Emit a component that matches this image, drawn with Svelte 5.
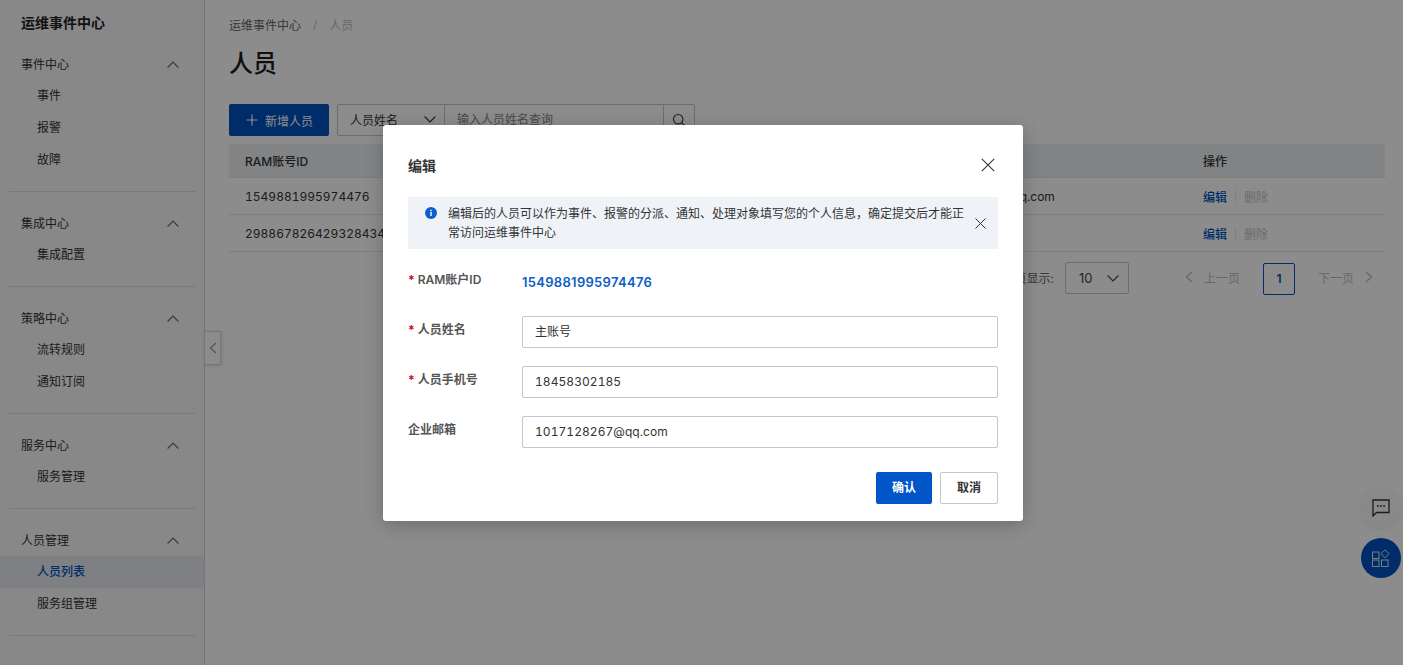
<script>
  const groups = [
    { title: '事件中心', items: ['事件', '报警', '故障'] },
    { title: '集成中心', items: ['集成配置'] },
    { title: '策略中心', items: ['流转规则', '通知订阅'] },
    { title: '服务中心', items: ['服务管理'] },
    { title: '人员管理', items: ['人员列表', '服务组管理'] }
  ];
  const rows = [
    { id: '1549881995974476', mail: '1017128267@qq.com' },
    { id: '298867826429328434', mail: '' }
  ];
</script>

<div class="page">
  <aside class="side">
    <div class="brand">运维事件中心</div>
    {#each groups as g}
      <section class="group">
        <div class="ghead">
          <span>{g.title}</span>
          <svg width="12" height="7" viewBox="0 0 12 7" fill="none"><path d="M.6 6.500 6 1l5.400 5.500" stroke="#666" stroke-width="1.100"/></svg>
        </div>
        {#each g.items as it}
          <div class="gitem" class:active={it === '人员列表'}>{it}</div>
        {/each}
      </section>
    {/each}
  </aside>
  <button class="collapse" aria-label="收起">
    <svg width="8" height="12" viewBox="0 0 8 12" fill="none"><path d="M7 1 1.500 6 7 11" stroke="#999" stroke-width="1.200"/></svg>
  </button>

  <main class="main">
    <div class="crumbs"><span>运维事件中心</span><i>/</i><em>人员</em></div>
    <h1>人员</h1>
    <div class="toolbar">
      <button class="primary">
        <svg width="12" height="12" viewBox="0 0 12 12" fill="none"><path d="M6 .5v11M.5 6h11" stroke="#fff" stroke-width="1.200"/></svg>
        新增人员
      </button>
      <div class="search">
        <div class="sel">人员姓名
          <svg width="12" height="7" viewBox="0 0 12 7" fill="none"><path d="M.6.500 6 6l5.400-5.500" stroke="#333" stroke-width="1.100"/></svg>
        </div>
        <div class="inp">输入人员姓名查询</div>
        <div class="mag">
          <svg width="14" height="14" viewBox="0 0 14 14" fill="none"><circle cx="6.200" cy="6.200" r="4.700" stroke="#333" stroke-width="1.100"/><path d="m9.600 9.600 3.400 3.400" stroke="#333" stroke-width="1.100"/></svg>
        </div>
      </div>
    </div>
    <div class="table">
      <div class="tr th"><span>RAM账号ID</span><span>人员姓名</span><span>企业邮箱</span><span>操作</span></div>
      {#each rows as r}
        <div class="tr">
          <span>{r.id}</span><span></span><span>{r.mail}</span>
          <span class="ops"><b>编辑</b><u></u><s>删除</s></span>
        </div>
      {/each}
    </div>
    <div class="pager">
      <span class="lab">每页显示:</span>
      <div class="size">10
        <svg width="12" height="7" viewBox="0 0 12 7" fill="none"><path d="M.6.500 6 6l5.400-5.500" stroke="#444" stroke-width="1.100"/></svg>
      </div>
      <span class="pg prev">
        <svg width="8" height="12" viewBox="0 0 8 12" fill="none"><path d="M7 1 1.500 6 7 11" stroke="#bbb" stroke-width="1.200"/></svg>
        上一页
      </span>
      <span class="cur">1</span>
      <span class="pg next">下一页
        <svg width="8" height="12" viewBox="0 0 8 12" fill="none"><path d="M1 1l5.500 5L1 11" stroke="#bbb" stroke-width="1.200"/></svg>
      </span>
    </div>
  </main>

  <div class="fab chat">
    <svg width="18" height="18" viewBox="0 0 18 18" fill="none"><path d="M1 1h16v12.500H4.500L1 17z" stroke="#333" stroke-width="1.300"/><path d="M5 7h1.800M8.100 7h1.800M11.200 7H13" stroke="#333" stroke-width="1.700"/></svg>
  </div>
  <div class="fab apps">
    <svg width="18" height="18" viewBox="0 0 18 18" fill="none" stroke="#fff" stroke-opacity=".85" stroke-width="1"><rect x=".5" y="3" width="6.500" height="6.500"/><rect x=".5" y="11" width="6.500" height="6.500"/><rect x="9.500" y="11" width="6.500" height="6.500"/><path d="M13 .8 17 4.800 13 8.800 9 4.800z"/></svg>
  </div>

  <div class="mask">
    <div class="dialog">
      <div class="dhead">
        <span>编辑</span>
        <svg width="14" height="14" viewBox="0 0 14 14" fill="none"><path d="M.8.800l12.400 12.400M13.200.8.800 13.200" stroke="#333" stroke-width="1.100"/></svg>
      </div>
      <div class="alert">
        <svg class="info" width="12" height="12" viewBox="0 0 12 12"><circle cx="6" cy="6" r="6" fill="#0b5fd0"/><rect x="5.300" y="5" width="1.400" height="4" fill="#fff"/><rect x="5.300" y="2.800" width="1.400" height="1.400" fill="#fff"/></svg>
        <p>编辑后的人员可以作为事件、报警的分派、通知、处理对象填写您的个人信息，确定提交后才能正常访问运维事件中心</p>
        <svg class="aclose" width="11" height="11" viewBox="0 0 11 11" fill="none"><path d="M.5.500l10 10M10.500.5l-10 10" stroke="#333" stroke-width="1"/></svg>
      </div>
      <div class="form">
        <div class="row ro"><label><i>*</i>RAM账户ID</label><strong>1549881995974476</strong></div>
        <div class="row"><label><i>*</i>人员姓名</label><div class="field">主账号</div></div>
        <div class="row"><label><i>*</i>人员手机号</label><div class="field">18458302185</div></div>
        <div class="row"><label>企业邮箱</label><div class="field">1017128267@qq.com</div></div>
      </div>
      <div class="foot">
        <button class="ok">确认</button>
        <button class="cancel">取消</button>
      </div>
    </div>
  </div>
</div>

<style>
  :global(body) {
    margin: 0;
    font-family: Inter, "Noto Sans CJK SC", sans-serif;
    color: #333;
  }
  button { font: inherit; }
  .page {
    position: relative;
    display: flex;
    width: 1403px;
    height: 665px;
    overflow: hidden;
    background: #fff;
    font-size: 12px;
  }
  .side {
    flex: none;
    box-sizing: border-box;
    width: 205px;
    height: 665px;
    border-right: 1px solid #d5d5d5;
    background: #f8f8f8;
    padding-top: 7px;
    overflow: hidden;
  }
  .brand {
    height: 32px;
    line-height: 32px;
    padding-left: 21px;
    font-size: 14px;
    font-weight: 700;
    color: #222;
  }
  .group {
    margin: 9px 9px 0 9px;
    padding-bottom: 15px;
    border-bottom: 1px solid #dcdcdc;
  }
  .group + .group { margin-top: 15px; }
  .ghead {
    display: flex;
    align-items: center;
    justify-content: space-between;
    height: 32px;
    padding: 0 16px 0 12px;
    color: #333;
  }
  .ghead span { margin-bottom: 2px; }
  .gitem {
    height: 32px;
    line-height: 31px;
    margin: 0 -9px;
    padding-left: 37px;
    color: #333;
  }
  .gitem.active {
    background: #e6e9ee;
    color: #0052c0;
    font-weight: 500;
  }
  .collapse {
    position: absolute;
    left: 204px;
    top: 331px;
    width: 17px;
    height: 34px;
    padding: 0;
    display: flex;
    align-items: center;
    justify-content: center;
    border: 1px solid #d5d5d5;
    background: #fff;
    box-shadow: 1px 1px 4px rgba(0,0,0,.15);
  }
  .main {
    flex: 1;
    min-width: 0;
    padding: 0 18px 0 24px;
  }
  .crumbs {
    display: flex;
    align-items: center;
    height: 16px;
    margin-top: 16px;
    color: #666;
  }
  .crumbs i { margin: 0 12px; font-style: normal; color: #c4c4c4; }
  .crumbs em { font-style: normal; color: #bdbdbd; }
  h1 {
    margin: 12px 0 0;
    height: 40px;
    line-height: 40px;
    font-size: 24px;
    font-weight: 500;
    color: #1c1c1c;
  }
  .toolbar {
    display: flex;
    gap: 8px;
    margin-top: 20px;
    height: 32px;
  }
  .primary {
    display: flex;
    align-items: center;
    gap: 7px;
    width: 100px;
    height: 32px;
    padding: 0 0 0 17px;
    border: 0;
    border-radius: 2px;
    background: #0052c0;
    color: #fff;
    font-size: 12px;
  }
  .search {
    display: flex;
    box-sizing: border-box;
    width: 358px;
    height: 32px;
    border: 1px solid #c4c6cc;
    border-radius: 2px;
    background: #fff;
  }
  .sel {
    display: flex;
    align-items: center;
    justify-content: space-between;
    box-sizing: border-box;
    width: 107px;
    padding: 0 8px 2px 12px;
    border-right: 1px solid #c4c6cc;
  }
  .inp {
    flex: 1;
    line-height: 30px;
    padding-left: 12px;
    color: #888;
  }
  .mag {
    display: flex;
    align-items: center;
    justify-content: center;
    width: 30px;
    border-left: 1px solid #c4c6cc;
  }
  .table { margin-top: 8px; }
  .tr {
    display: grid;
    grid-template-columns: 347px 331px 280px 1fr;
    align-items: center;
    box-sizing: border-box;
    height: 37px;
    border-bottom: 1px solid #e6e6e6;
    padding-left: 16px;
    font-variant-numeric: tabular-nums;
  }
  .th {
    height: 34px;
    background: #eceef3;
    font-weight: 500;
    border-bottom: 1px solid #e3e3e3;
    font-variant-numeric: normal;
  }
  .ops { display: flex; align-items: center; }
  .ops b { font-weight: 500; color: #0052c0; }
  .ops u { width: 1px; height: 12px; margin: 0 8px; background: #e6e6e6; }
  .ops s { text-decoration: none; color: #c4c4c4; }
  .pager {
    display: flex;
    align-items: center;
    margin-top: 10px;
    height: 32px;
    padding-left: 752px;
    color: #666;
  }
  .lab {
    box-sizing: border-box;
    width: 84px;
    padding: 0 11px 2px 0;
    text-align: right;
  }
  .size {
    display: flex;
    align-items: center;
    justify-content: space-between;
    box-sizing: border-box;
    width: 64px;
    height: 32px;
    padding: 0 9px 0 13px;
    border: 1px solid #c4c6cc;
    border-radius: 2px;
    font-size: 13px;
    color: #444;
  }
  .pg {
    display: flex;
    align-items: center;
    gap: 11px;
    padding-bottom: 2px;
    color: #bdbdbd;
  }
  .prev { margin-left: 56px; }
  .cur {
    box-sizing: border-box;
    width: 32px;
    height: 32px;
    margin: 2px 23px 0;
    line-height: 30px;
    text-align: center;
    border: 1px solid #0052c0;
    border-radius: 2px;
    color: #0052c0;
    font-weight: 600;
  }
  .fab {
    position: absolute;
    left: 1361px;
    width: 40px;
    height: 40px;
    border-radius: 50%;
    display: flex;
    align-items: center;
    justify-content: center;
  }
  .chat { top: 488px; background: #fafafa; box-shadow: 0 1px 4px rgba(0,0,0,.08); }
  .apps { top: 538px; background: #0052c0; }
  .mask {
    position: absolute;
    inset: 0;
    padding: 125px 0 0 383px;
    background: rgba(0,0,0,.45);
  }
  .dialog {
    box-sizing: border-box;
    width: 640px;
    height: 396px;
    padding: 0 25px;
    background: #fff;
    border-radius: 3px;
    box-shadow: 0 4px 18px rgba(0,0,0,.22);
  }
  .dhead {
    display: flex;
    align-items: center;
    justify-content: space-between;
    height: 72px;
    padding-right: 3px;
    font-size: 14px;
    font-weight: 700;
    color: #333;
    padding-top: 7px;
    box-sizing: border-box;
  }
  .alert {
    position: relative;
    box-sizing: border-box;
    height: 52px;
    padding: 7px 33px 0 40px;
    background: #eff3f8;
    line-height: 19px;
  }
  .alert p { margin: 0; }
  .info { position: absolute; left: 17px; top: 10px; }
  .aclose { position: absolute; left: 567px; top: 21px; }
  .form { margin-top: 17px; }
  .row {
    display: flex;
    margin-bottom: 18px;
    height: 32px;
    font-size: 12px;
  }
  .row.ro { height: 32px; }
  label {
    width: 114px;
    flex: none;
    line-height: 28px;
    font-weight: 600;
    color: #555;
  }
  label i {
    font-style: normal;
    color: #d0021b;
    font-weight: 700;
    margin-right: 3px;
  }
  strong {
    line-height: 33px;
    font-size: 13px;
    font-weight: 600;
    color: #0b5fc4;
    letter-spacing: .3px;
  }
  .field {
    flex: 1;
    box-sizing: border-box;
    height: 32px;
    line-height: 30px;
    padding-left: 12px;
    border: 1px solid #c4c6cc;
    border-radius: 2px;
    color: #333;
    letter-spacing: .05px;
    font-variant-numeric: tabular-nums;
  }
  .foot {
    display: flex;
    justify-content: flex-end;
    gap: 8px;
    margin-top: 24px;
  }
  .foot button {
    height: 32px;
    padding: 0 0 3px;
    border-radius: 2px;
    font-size: 12px;
    font-weight: 700;
  }
  .ok { width: 56px; border: 0; background: #0056c9; color: #fff; }
  .cancel { width: 58px; border: 1px solid #c4c6cc; background: #fff; color: #333; }
</style>
